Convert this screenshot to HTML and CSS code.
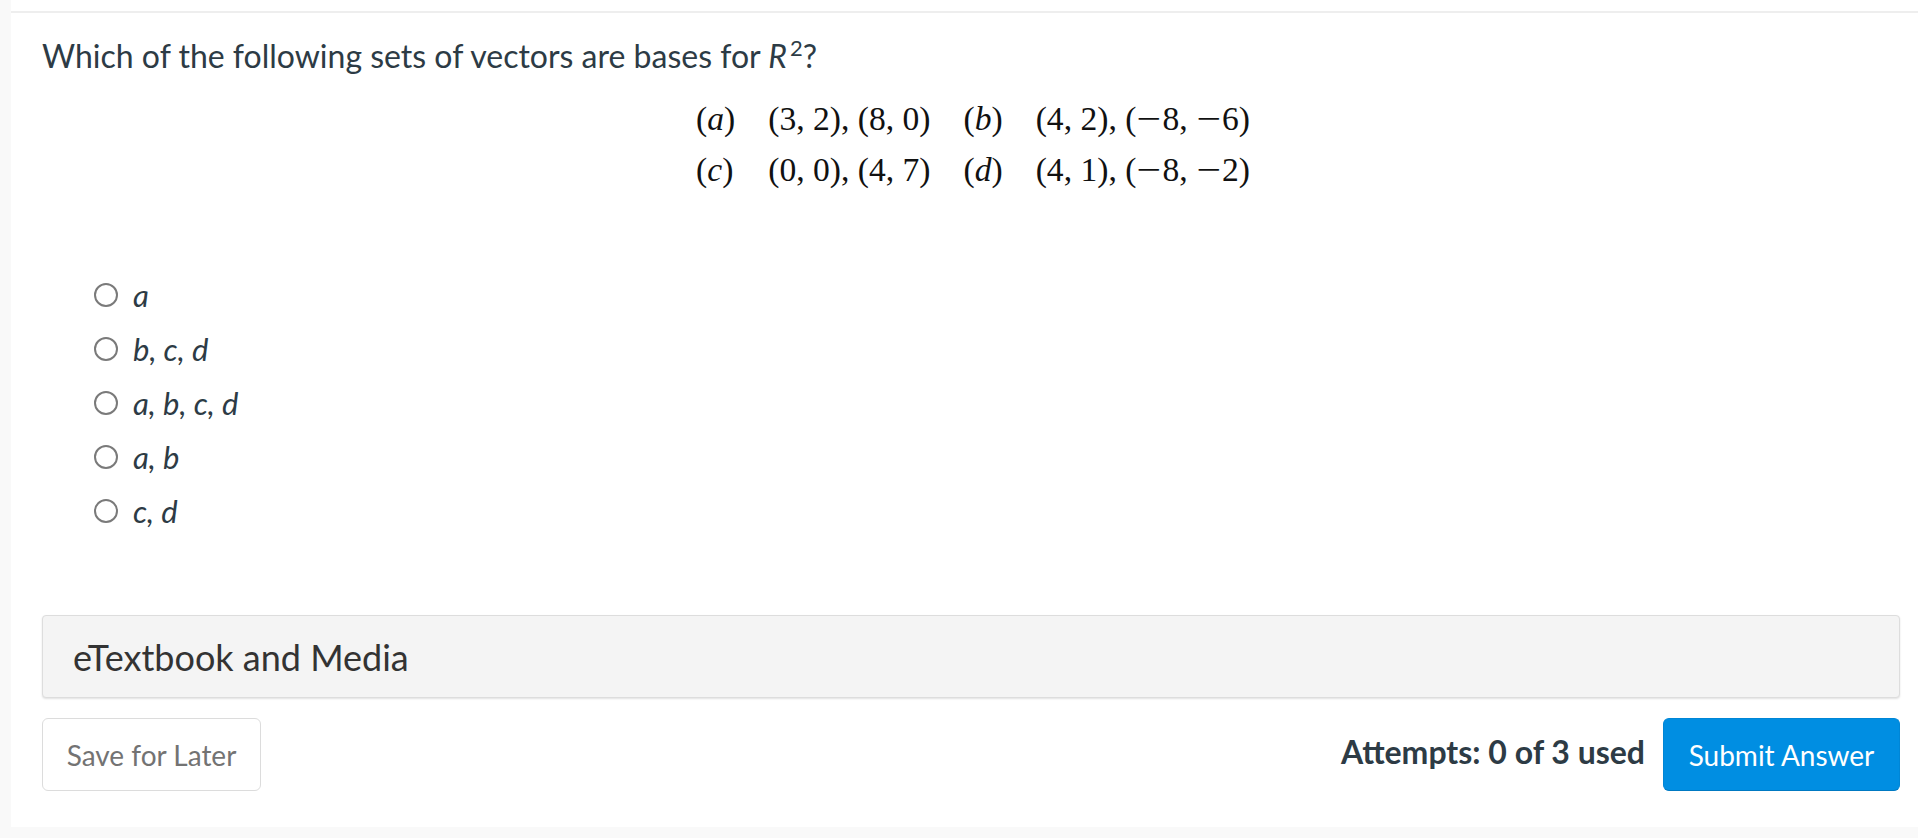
FILE: index.html
```html
<!DOCTYPE html>
<html lang="en">
<head>
<meta charset="utf-8">
<title>Question</title>
<link rel="stylesheet" href="styles.css">
</head>
<body>
<div class="page">
  <div class="topbar"></div>
  <div class="content">
    <p class="question">Which of the following sets of vectors are bases for <i class="var">R</i><sup class="sup">2</sup>?</p>
    <div class="vectors">
      <span class="lbl">(<i>a</i>)</span><span class="vec">(3, 2), (8, 0)</span>
      <span class="lbl">(<i>b</i>)</span><span class="vec">(4, 2), (<span class="minus">−</span>8, <span class="minus">−</span>6)</span>
      <span class="lbl">(<i>c</i>)</span><span class="vec">(0, 0), (4, 7)</span>
      <span class="lbl">(<i>d</i>)</span><span class="vec">(4, 1), (<span class="minus">−</span>8, <span class="minus">−</span>2)</span>
    </div>
    <ul class="options">
      <li class="option"><span class="radio"></span><span class="opt-text">a</span></li>
      <li class="option"><span class="radio"></span><span class="opt-text">b, c, d</span></li>
      <li class="option"><span class="radio"></span><span class="opt-text">a, b, c, d</span></li>
      <li class="option"><span class="radio"></span><span class="opt-text">a, b</span></li>
      <li class="option"><span class="radio"></span><span class="opt-text">c, d</span></li>
    </ul>
    <div class="media-panel">eTextbook and Media</div>
    <div class="actions">
      <button class="btn-save">Save for Later</button>
      <div class="actions-right">
        <span class="attempts">Attempts: 0 of 3 used</span>
        <button class="btn-submit">Submit Answer</button>
      </div>
    </div>
  </div>
</div>
</body>
</html>
```

FILE: styles.css
```css
html, body {
  margin: 0;
  padding: 0;
  background: #f9f9f9;
}
body {
  font-family: Lato, "Liberation Sans", sans-serif;
  color: #2d3b45;
}
.page {
  margin-left: 11px;
  height: 827px;
  background: #ffffff;
}
.topbar {
  height: 11px;
  border-bottom: 2px solid #eeeeee;
}
.content {
  padding: 0 18px 0 31px;
}
.question {
  margin: 20px 0 0 0;
  font-size: 32px;
  line-height: 45px;
  height: 45px;
}
.var {
  font-style: italic;
}
.sup {
  font-size: 22px;
  vertical-align: 12px;
  line-height: 0;
  margin-left: 3px;
}
.vectors {
  margin: 15px auto 0 auto;
  display: grid;
  grid-template-columns: auto auto auto auto;
  column-gap: 33px;
  width: max-content;
  font-family: "Liberation Serif", "Times New Roman", serif;
  font-size: 33.6px;
  line-height: 51px;
  color: #111;
  transform: translateX(2px);
}
.vectors .lbl i {
  font-style: italic;
}
.minus {
  display: inline-block;
  width: 26px;
  text-align: center;
  transform: scaleX(1.3);
}
.options {
  list-style: none;
  margin: 73px 0 0 0;
  padding: 0;
}
.option {
  display: flex;
  align-items: center;
  height: 54px;
  padding-left: 52px;
}
.radio {
  box-sizing: border-box;
  width: 24px;
  height: 24px;
  border: 2px solid #7a7a7a;
  border-radius: 50%;
  flex: none;
}
.opt-text {
  margin-left: 15px;
  font-style: italic;
  font-size: 31px;
  line-height: 40px;
  color: #2d3b45;
}
.media-panel {
  box-sizing: border-box;
  margin-top: 77px;
  height: 83px;
  background: #f4f4f4;
  border: 1px solid #dddddd;
  border-radius: 4px;
  box-shadow: 0 1px 2px rgba(0, 0, 0, 0.12);
  padding-left: 30px;
  display: flex;
  align-items: center;
  font-size: 36px;
  color: #333333;
}
.actions {
  margin-top: 20px;
  display: flex;
  justify-content: space-between;
  align-items: center;
}
.btn-save {
  box-sizing: border-box;
  width: 219px;
  height: 73px;
  background: #ffffff;
  border: 1.5px solid #dcdcdc;
  border-radius: 6px;
  font-family: Lato, "Liberation Sans", sans-serif;
  font-size: 28px;
  color: #737373;
  padding: 0;
}
.actions-right {
  display: flex;
  align-items: center;
  gap: 18px;
}
.attempts {
  font-weight: 700;
  font-size: 32px;
  color: #2d3b45;
  margin-top: -6px;
}
.btn-submit {
  box-sizing: border-box;
  width: 237px;
  height: 73px;
  background: #008ee2;
  border: 1px solid #0086d6;
  border-bottom-color: #0079c2;
  border-radius: 6px;
  font-family: Lato, "Liberation Sans", sans-serif;
  font-size: 28px;
  color: #ffffff;
  padding: 0;
}
```
